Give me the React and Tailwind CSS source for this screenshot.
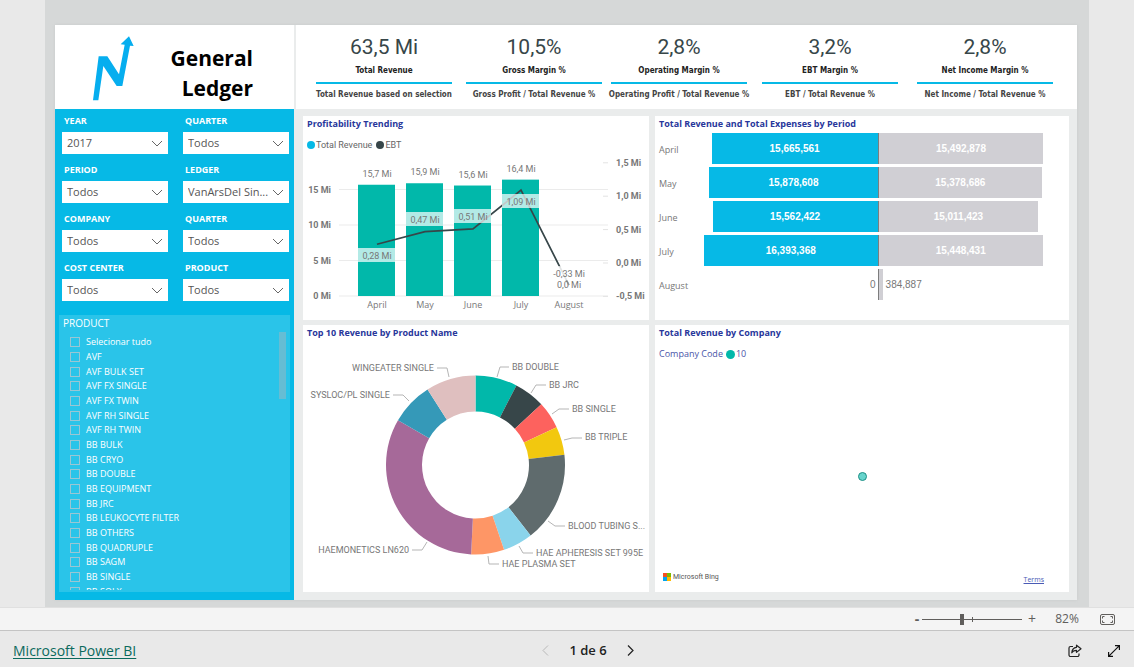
import React from "react";

const SEGOE = "font-['Open_Sans','Noto_Sans',sans-serif]";
const DIN = "font-[Roboto,'Liberation_Sans',sans-serif]";
const TAHOMA = "font-['DejaVu_Sans_Condensed','DejaVu_Sans',sans-serif]";
const ARIAL = "font-['Liberation_Sans',Arial,sans-serif]";

const kpis = [
  { value: "63,5 Mi", label: "Total Revenue", note: "Total Revenue based on selection" },
  { value: "10,5%", label: "Gross Margin %", note: "Gross Profit / Total Revenue %" },
  { value: "2,8%", label: "Operating Margin %", note: "Operating Profit / Total Revenue %" },
  { value: "3,2%", label: "EBT Margin %", note: "EBT / Total Revenue %" },
  { value: "2,8%", label: "Net Income Margin %", note: "Net Income / Total Revenue %" },
];

const filters = [
  { id: "year", label: "YEAR", value: "2017" },
  { id: "quarter", label: "QUARTER", value: "Todos" },
  { id: "period", label: "PERIOD", value: "Todos" },
  { id: "ledger", label: "LEDGER", value: "VanArsDel Sin..." },
  { id: "company", label: "COMPANY", value: "Todos" },
  { id: "quarter-2", label: "QUARTER", value: "Todos" },
  { id: "cost-center", label: "COST CENTER", value: "Todos" },
  { id: "product", label: "PRODUCT", value: "Todos" },
];

const products = [
  "Selecionar tudo",
  "AVF",
  "AVF BULK SET",
  "AVF FX SINGLE",
  "AVF FX TWIN",
  "AVF RH SINGLE",
  "AVF RH TWIN",
  "BB BULK",
  "BB CRYO",
  "BB DOUBLE",
  "BB EQUIPMENT",
  "BB JRC",
  "BB LEUKOCYTE FILTER",
  "BB OTHERS",
  "BB QUADRUPLE",
  "BB SAGM",
  "BB SINGLE",
  "BB SOLX",
];

const months = [
  { name: "April", revenue: 15.67, revenueText: "15,7 Mi", ebt: 0.28, ebtText: "0,28 Mi", ebtY: 100 },
  { name: "May", revenue: 15.88, revenueText: "15,9 Mi", ebt: 0.47, ebtText: "0,47 Mi", ebtY: 64 },
  { name: "June", revenue: 15.56, revenueText: "15,6 Mi", ebt: 0.51, ebtText: "0,51 Mi", ebtY: 61 },
  { name: "July", revenue: 16.39, revenueText: "16,4 Mi", ebt: 1.09, ebtText: "1,09 Mi", ebtY: 46 },
  { name: "August", revenue: 0, revenueText: "0,0 Mi", ebt: -0.33, ebtText: "-0,33 Mi", ebtY: 118 },
];

const periods = [
  { name: "April", revenue: 15665561, expenses: 15492878 },
  { name: "May", revenue: 15878608, expenses: 15378686 },
  { name: "June", revenue: 15562422, expenses: 15011423 },
  { name: "July", revenue: 16393368, expenses: 15448431 },
  { name: "August", revenue: 0, expenses: 384887 },
];

const slices = [
  { name: "BB DOUBLE", from: 0, to: 27.2, color: "#01b8aa", x: 209, y: 43, anchor: "start", line: "194,50 197,40 206,40" },
  { name: "BB JRC", from: 27.2, to: 47.3, color: "#374649", x: 246, y: 61, anchor: "start", line: "228,66 233,58 243,58" },
  { name: "BB SINGLE", from: 47.3, to: 65, color: "#fd625e", x: 269, y: 85, anchor: "start", line: "249,87 256,82 266,82" },
  { name: "BB TRIPLE", from: 65, to: 83.5, color: "#f2c80f", x: 282, y: 113, anchor: "start", line: "261,113 269,111 279,111" },
  { name: "BLOOD TUBING S...", from: 83.5, to: 142, color: "#5f6b6d", x: 265, y: 202, anchor: "start", line: "245,194 252,199 262,199" },
  { name: "HAE APHERESIS SET 995E", from: 142, to: 161.4, color: "#8ad4eb", x: 233, y: 229, anchor: "start", line: "216,219 220,226 230,226" },
  { name: "HAE PLASMA SET", from: 161.4, to: 182.8, color: "#fe9666", x: 199, y: 240, anchor: "start", line: "185,229 186,237 196,237" },
  { name: "HAEMONETICS LN620", from: 182.8, to: 300, color: "#a66999", x: 106, y: 226, anchor: "end", line: "124,215 119,223 109,223" },
  { name: "SYSLOC/PL SINGLE", from: 300, to: 327.6, color: "#3599b8", x: 87, y: 71, anchor: "end", line: "106,74 100,68 90,68" },
  { name: "WINGEATER SINGLE", from: 327.6, to: 360, color: "#dfbfbf", x: 131, y: 44, anchor: "end", line: "146,50 144,41 134,41" },
];

function ringPath(cx, cy, outer, inner, from, to) {
  const at = (r, deg) => {
    const a = (deg * Math.PI) / 180;
    return `${(cx + r * Math.sin(a)).toFixed(2)} ${(cy - r * Math.cos(a)).toFixed(2)}`;
  };
  const large = to - from > 180 ? 1 : 0;
  return `M${at(outer, from)} A${outer} ${outer} 0 ${large} 1 ${at(outer, to)} L${at(inner, to)} A${inner} ${inner} 0 ${large} 0 ${at(inner, from)} Z`;
}

function Card({ title, children }) {
  return (
    <section className="flex min-w-0 flex-col bg-white">
      <h2 className="px-1 pt-px text-[9px] leading-[14px] font-bold text-[#28379b]">{title}</h2>
      {children}
    </section>
  );
}

function Logo() {
  return (
    <svg className="h-[67px] w-[43px]" viewBox="158 104 129 201" aria-hidden="true">
      <path
        fill="#06aeef"
        d="M161 300 L178 168 L204 168 L239 222 L256 133 L244 132 L269 108 L283 137 L272 136 L249 257 L232 257 L192 197 L177 300 Z"
      />
    </svg>
  );
}

function Kpi({ value, label, note }) {
  return (
    <div className="flex w-[136px] flex-col items-center whitespace-nowrap">
      <div className={`${DIN} text-[21px] leading-6 text-[#374649]`}>{value}</div>
      <div className={`${TAHOMA} mt-1 text-[8px] leading-4 font-bold text-[#222]`}>{label}</div>
      <div className="mt-[3px] h-[2px] w-full bg-[#06b9e6]" />
      <div className={`${TAHOMA} mt-[3px] text-[8px] leading-4 font-bold text-[#444]`}>{note}</div>
    </div>
  );
}

function Filter({ id, label, value }) {
  return (
    <div className="flex h-[49px] flex-col">
      <label htmlFor={id} className="pl-0.5 text-[9px] leading-[22px] font-bold text-white">
        {label}
      </label>
      <div className="relative flex">
        <select
          id={id}
          className="h-[22px] w-full appearance-none bg-white pr-5 pl-[5px] text-[11px] leading-[22px] text-[#555]"
          defaultValue={value}
        >
          <option>{value}</option>
        </select>
        <svg className="pointer-events-none absolute top-2 right-[5px] h-[7px] w-3" viewBox="0 0 12 7" aria-hidden="true">
          <path d="M1 1 L6 6 L11 1" fill="none" stroke="#666" strokeWidth="1" />
        </svg>
      </div>
    </div>
  );
}

function ProductSlicer() {
  return (
    <fieldset className="mx-1 mt-[9px] mb-2 flex min-h-0 flex-1 flex-col bg-[#2ac4e9] text-white">
      <legend className="float-left w-full pl-1 text-[10px] leading-[17px]">PRODUCT</legend>
      <div className="flex h-[258px] overflow-hidden pr-1 pl-[11px]">
        <ul className="grid h-[267px] flex-1 auto-rows-fr pt-[3px]">
          {products.map((name) => (
            <li key={name} className="flex min-h-0 items-center">
              <label className="flex items-center gap-[6px] text-[9px] leading-[14px]">
                <input type="checkbox" className="size-[10px] appearance-none border border-[#9ac6d3]" />
                {name}
              </label>
            </li>
          ))}
        </ul>
        <div className="h-[67px] w-[7px] bg-[#66bdd4]" />
      </div>
    </fieldset>
  );
}

function ProfitabilityChart() {
  const revenueY = (v) => 141 - v * 7.1;
  const ebtY = (v) => 108 - v * 66.8;
  const centre = (i) => 74 + i * 48;
  return (
    <>
      <div className={`${DIN} mt-[7px] flex items-center gap-1 px-1 text-[9px] leading-[14px] text-[#666]`}>
        <span className="flex items-center gap-px">
          <i className="size-2 rounded-full bg-[#06b9e6]" />
          Total Revenue
        </span>
        <span className="flex items-center gap-px">
          <i className="size-2 rounded-full bg-[#374649]" />
          EBT
        </span>
      </div>
      <svg className={`${DIN} mt-[3px] w-full`} viewBox="0 0 346 160" role="img" aria-label="Profitability Trending">
        {[0, 5, 10, 15].map((v) => (
          <g key={v}>
            <line x1="36" x2="305" y1={revenueY(v)} y2={revenueY(v)} stroke="#ebebeb" />
            <text x="28" y={revenueY(v) + 3} textAnchor="end" fontSize="9" fontWeight="700" fill="#777">
              {v} Mi
            </text>
          </g>
        ))}
        {[
          ["1,5 Mi", 1.5],
          ["1,0 Mi", 1],
          ["0,5 Mi", 0.5],
          ["0,0 Mi", 0],
          ["-0,5 Mi", -0.5],
        ].map(([text, v]) => (
          <g key={text}>
            <line x1="300" x2="305" y1={ebtY(v)} y2={ebtY(v)} stroke="#e3e3e3" />
            <text x="313" y={ebtY(v) + 3} fontSize="9" fontWeight="700" fill="#777">
              {text}
            </text>
          </g>
        ))}
        {months.map((m, i) => (
          <rect key={m.name} x={centre(i) - 19} width="37" y={revenueY(m.revenue)} height={m.revenue * 7.1} fill="#01b8aa" />
        ))}
        <polyline
          points={months.map((m, i) => `${centre(i)},${ebtY(m.ebt)}`).join(" ")}
          fill="none"
          stroke="#374649"
          strokeWidth="1.7"
        />
        <rect x={centre(4) - 14} width="28" y="112" height="24" fill="#fff" fillOpacity="0.5" />
        {months.map((m, i) => (
          <g key={m.name} textAnchor="middle" fontSize="9" fill="#777">
            <rect x={centre(i) - 19} width="37" y={m.ebtY - 7} height="14" fill="#fff" fillOpacity="0.7" />
            <text x={centre(i)} y={m.ebtY + 4}>
              {m.ebtText}
            </text>
            <text x={centre(i)} y={revenueY(m.revenue) - 8}>
              {m.revenueText}
            </text>
            <text x={centre(i)} y="153" className={SEGOE}>
              {m.name}
            </text>
          </g>
        ))}
      </svg>
    </>
  );
}

function TornadoChart() {
  const max = 16393368;
  return (
    <ul className="mt-0.5 flex flex-col gap-[3px] pr-4 pl-1">
      {periods.map((p) => {
        const small = p.revenue === 0;
        const tone = small ? "text-[#777]" : "font-bold text-white";
        return (
          <li key={p.name} className="grid h-[31px] grid-cols-[45px_1fr_1fr] items-center">
            <span className="pt-0.5 text-[9px] text-[#777]">{p.name}</span>
            <div className={`${ARIAL} flex h-full items-center justify-end border-r border-[#7d7d7d] text-[10px]`}>
              {small && <span className={`pr-0.5 ${tone}`}>0</span>}
              <div className="flex h-full items-center justify-center bg-[#06b9e6]" style={{ width: `${(p.revenue / max) * 100}%` }}>
                {!small && <span className={tone}>{p.revenue.toLocaleString("en-US")}</span>}
              </div>
            </div>
            <div className={`${ARIAL} flex h-full items-center text-[10px]`}>
              <div className="flex h-full items-center justify-center bg-[#d0cfd4]" style={{ width: `${(p.expenses / max) * 100}%` }}>
                {!small && <span className={tone}>{p.expenses.toLocaleString("en-US")}</span>}
              </div>
              {small && <span className={`pl-[3px] ${tone}`}>{p.expenses.toLocaleString("en-US")}</span>}
            </div>
          </li>
        );
      })}
    </ul>
  );
}

function DonutChart() {
  return (
    <svg className={`${DIN} w-full`} viewBox="0 13 346 240" role="img" aria-label="Top 10 Revenue by Product Name">
      {slices.map((s) => (
        <g key={s.name}>
          <path d={ringPath(172.5, 138, 89.5, 53.5, s.from, s.to)} fill={s.color} />
          <polyline points={s.line} fill="none" stroke="#b5b5b5" strokeWidth="1" />
          <text x={s.x} y={s.y} textAnchor={s.anchor} fontSize="9" fill="#777">
            {s.name}
          </text>
        </g>
      ))}
    </svg>
  );
}

function CompanyMap() {
  return (
    <div className="flex flex-1 flex-col">
      <div className="mt-[7px] flex items-center px-1 text-[9px] leading-[14px] text-[#4a55a8]">
        Company Code
        <i className="mr-px ml-[3px] size-[9px] rounded-full bg-[#01b8aa]" />
        10
      </div>
      <div className="relative flex-1">
        <span className="absolute top-[111px] left-[49%] size-[9px] rounded-full border border-[#1e8f86] bg-[#67d4cc]" />
      </div>
      <div className="flex items-start justify-between pr-[25px] pb-1 pl-2 text-[7px] leading-4 text-[#555]">
        <span className={`${DIN} flex items-center gap-0.5`}>
          <svg className="size-2" viewBox="0 0 8 8" aria-hidden="true">
            <path fill="#f25022" d="M0 0h4v4H0z" />
            <path fill="#7fba00" d="M4 0h4v4H4z" />
            <path fill="#00a4ef" d="M0 4h4v4H0z" />
            <path fill="#ffb900" d="M4 4h4v4H4z" />
          </svg>
          Microsoft Bing
        </span>
        <a href="#terms" className="pt-[3px] text-[#4a5bb5] underline">
          Terms
        </a>
      </div>
    </div>
  );
}

function ZoomBar() {
  return (
    <div className="flex h-6 items-center justify-end border-t border-b border-t-[#e0e0e0] border-b-[#c4c4c4] bg-[#f4f4f4] pr-[19px] text-[#605e5c]">
      <button type="button" aria-label="Zoom out" className="w-[10px] text-[14px] leading-5 font-bold">
        -
      </button>
      <div className="relative flex w-[100px] items-center">
        <input
          type="range"
          aria-label="Zoom"
          min="0"
          max="100"
          defaultValue="40"
          className="h-3 w-full appearance-none bg-transparent [&::-webkit-slider-runnable-track]:h-px [&::-webkit-slider-runnable-track]:bg-[#605e5c] [&::-webkit-slider-thumb]:-mt-[5px] [&::-webkit-slider-thumb]:h-[11px] [&::-webkit-slider-thumb]:w-1 [&::-webkit-slider-thumb]:appearance-none [&::-webkit-slider-thumb]:bg-[#605e5c]"
        />
        <span className="absolute left-1/2 h-[5px] w-px bg-[#605e5c]" />
      </div>
      <button type="button" aria-label="Zoom in" className="w-5 text-[14px] leading-5">
        +
      </button>
      <span className="w-[50px] text-center text-[12px] leading-5">82%</span>
      <button type="button" aria-label="Fit to page" className="ml-2">
        <svg className="h-[11px] w-[15px]" viewBox="0 0 15 11" fill="none" stroke="#605e5c" aria-hidden="true">
          <rect x="0.5" y="0.5" width="14" height="10" rx="1.5" />
          <path d="M4.500 2.500H2.500V4.500M2.500 6.500V8.500H4.500M10.500 2.500H12.500V4.500M12.500 6.500V8.500H10.500" />
        </svg>
      </button>
    </div>
  );
}

function Footer() {
  return (
    <footer className="grid h-9 grid-cols-3 items-center bg-[#e9e9e9] px-[13px] pt-[3px]">
      <a href="#powerbi" className="text-[14px] leading-5 text-[#0b6a5d] underline underline-offset-2">
        Microsoft Power BI
      </a>
      <nav aria-label="Pages" className="ml-[42px] flex items-center justify-center gap-5 text-[13px] text-[#222]">
        <button type="button" aria-label="Previous page">
          <svg className="h-[11px] w-[7px]" viewBox="0 0 7 11" fill="none" stroke="#b8b8b8" aria-hidden="true">
            <path d="M6 0.500 L1 5.500 L6 10.500" />
          </svg>
        </button>
        <span className="font-semibold">1 de 6</span>
        <button type="button" aria-label="Next page">
          <svg className="h-[11px] w-[7px]" viewBox="0 0 7 11" fill="none" stroke="#222" strokeWidth="1.2" aria-hidden="true">
            <path d="M1 0.500 L6 5.500 L1 10.500" />
          </svg>
        </button>
      </nav>
      <div className="flex items-center justify-end gap-[26px] pr-px">
        <button type="button" aria-label="Share">
          <svg className="size-[14px]" viewBox="0 0 14 14" fill="none" stroke="#222" strokeWidth="1.2" strokeLinejoin="round" aria-hidden="true">
            <path d="M5 2.500H2.500A1.500 1.500 0 0 0 1 4V11A1.500 1.500 0 0 0 2.500 12.500H9.500A1.500 1.500 0 0 0 11 11V9.500" />
            <path d="M8.500 1.200L13 4.800L8.500 8.400V6.400C6.400 6.400 4.800 7 3.800 8.800C4 5.600 5.800 3.500 8.500 3.300Z" />
          </svg>
        </button>
        <button type="button" aria-label="Full screen">
          <svg className="size-3" viewBox="0 0 12 12" fill="none" stroke="#111" strokeWidth="1.2" aria-hidden="true">
            <path d="M0.600 11.400L11.400 0.600M7 0.600H11.400V5M0.600 7V11.400H5" />
          </svg>
        </button>
      </div>
    </footer>
  );
}

export default function App() {
  return (
    <div className={`${SEGOE} flex min-h-screen flex-col bg-[#e9e9e9]`}>
      <div className="flex flex-1 flex-col px-[45px]">
        <main className="flex flex-1 flex-col bg-[#d6d8d8] pt-[25px] pr-3 pb-[7px] pl-[10px]">
          <div className="flex flex-1 gap-0.5 bg-[#eaecec] shadow-[0_0_3px_#c8caca]">
            <aside className="flex w-[239px] shrink-0 flex-col">
              <header className="flex h-[84px] justify-between bg-white pt-[10px] pr-[41px] pl-[37px]">
                <Logo />
                <h1 className="mt-2 text-right text-[21px] leading-[30px] font-bold text-black">
                  General
                  <br />
                  Ledger
                </h1>
              </header>
              <div className="flex flex-1 flex-col bg-[#06b9e6] pt-px">
                <div className="grid grid-cols-2 gap-x-[15px] pr-[5px] pl-[7px]">
                  {filters.map((f) => (
                    <Filter key={f.id} {...f} />
                  ))}
                </div>
                <ProductSlicer />
              </div>
            </aside>
            <div className="flex min-w-0 flex-1 flex-col">
              <div className="grid h-[84px] grid-cols-[150fr_145fr_151fr_155fr_136fr] bg-white pt-[10px] pr-6 pl-5">
                {kpis.map((k) => (
                  <Kpi key={k.label} {...k} />
                ))}
              </div>
              <div className="grid flex-1 grid-cols-[346fr_414fr] grid-rows-[204px_1fr] gap-x-[6px] gap-y-[5px] pt-[7px] pr-2 pb-2 pl-[7px]">
                <Card title="Profitability Trending">
                  <ProfitabilityChart />
                </Card>
                <Card title="Total Revenue and Total Expenses by Period">
                  <TornadoChart />
                </Card>
                <Card title="Top 10 Revenue by Product Name">
                  <DonutChart />
                </Card>
                <Card title="Total Revenue by Company">
                  <CompanyMap />
                </Card>
              </div>
            </div>
          </div>
        </main>
      </div>
      <ZoomBar />
      <Footer />
    </div>
  );
}
